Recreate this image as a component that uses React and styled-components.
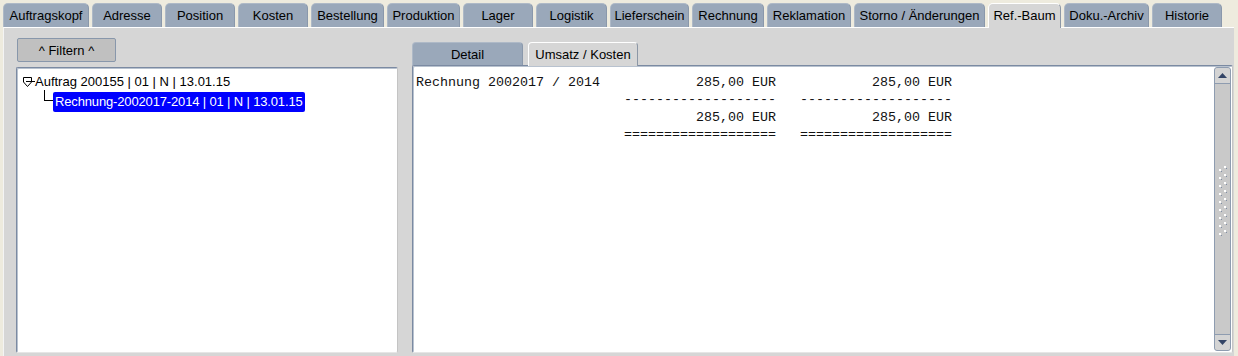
import React from "react";
import styled, { createGlobalStyle } from "styled-components";

const GlobalStyle = createGlobalStyle`
    html, body {
        margin: 0;
        padding: 0;
    }
    body {
        background: #eeebde;
        font-family: "Liberation Sans", Arial, sans-serif;
    }
`

const Page = styled.div`
    width: 1238px;
    height: 356px;
    display: flex;
    flex-direction: column;
    overflow: hidden;
    background: #eeebde;
`

const TabBar = styled.div`
    display: flex;
    gap: 3px;
    padding: 3px 3px 0 3px;
    height: 24px;
    position: relative;
    z-index: 1;
`

const Tab = styled.div`
    box-sizing: border-box;
    width: ${props => props.$w}px;
    height: ${props => props.$active ? 25 : 24}px;
    border-radius: 5px 5px 0 0;
    border: 1px solid;
    border-bottom: none;
    border-color: ${props => props.$active ? "#ffffff #8c97a6 transparent #ffffff" : "#aeb9c7 #8a98ab transparent #aeb9c7"};
    background: ${props => props.$active ? "#d6d6d6" : "#9aa8ba"};
    font-size: 13px;
    color: #000;
    display: flex;
    align-items: center;
    justify-content: center;
    white-space: nowrap;
    padding-bottom: ${props => props.$active ? 1 : 0}px;
`

const Content = styled.div`
    flex: 1;
    display: flex;
    margin: 0 4px 0 3px;
    padding: 10px 1px 3px 12px;
    background: #d6d6d6;
    border-top: 1px solid #ffffff;
    border-left: 1px solid #f4f4f4;
    min-height: 0;
`

const LeftColumn = styled.div`
    width: 382px;
    display: flex;
    flex-direction: column;
    gap: 5px;
`

const FilterButton = styled.div`
    box-sizing: border-box;
    width: 99px;
    height: 24px;
    margin-left: 1px;
    background: #c0c0c0;
    border: 1px solid #8897ab;
    border-radius: 2px;
    font-size: 13px;
    display: flex;
    align-items: center;
    justify-content: center;
    color: #000;
`

const Panel = styled.div`
    flex: 1;
    display: flex;
    background: #ffffff;
    border: 1px solid;
    border-color: #7b8aa2 #c4c4c4 #e6e6e6 #7b8aa2;
    border-radius: 2px;
    box-shadow: inset 1px 1px 0 #b8c2cf;
    min-height: 0;
`

const Tree = styled.div`
    flex: 1;
    padding: 5px 0 0 5px;
    font-size: 13px;
    color: #000;
`

const TreeRow = styled.div`
    display: flex;
    align-items: ${props => props.$child ? "flex-start" : "center"};
    height: ${props => props.$child ? 21 : 17}px;
    margin-left: ${props => props.$child ? 22 : 0}px;
    margin-top: ${props => props.$child ? 2 : 0}px;
`

const Connector = styled.span`
    box-sizing: border-box;
    width: 9px;
    height: 11px;
    margin-top: -2px;
    border-left: 1px solid #000;
    border-bottom: 1px solid #000;
`

const Selected = styled.span`
    height: 20px;
    line-height: 20px;
    padding: 0 2px;
    background: #0000ff;
    color: #fff;
    border-radius: 2px;
    letter-spacing: -0.15px;
`

const RightColumn = styled.div`
    flex: 1;
    display: flex;
    flex-direction: column;
    margin-left: 14px;
    padding-top: 4px;
`

const SubTabBar = styled.div`
    display: flex;
    gap: 5px;
    height: 23px;
    position: relative;
    z-index: 1;
`

const SubTab = styled(Tab)`
    height: ${props => props.$active ? 24 : 23}px;
    border-radius: 4px 4px 0 0;
`

const Report = styled.pre`
    flex: 1;
    margin: 0;
    padding: 8px 0 0 3px;
    font-family: "Liberation Mono", "Courier New", monospace;
    font-size: 13.33px;
    line-height: 17.4px;
    color: #111;
`

const Scrollbar = styled.div`
    width: 15px;
    margin: 1px 1px 1px 0;
    display: flex;
    flex-direction: column;
    background: #c9c9c9;
    border: 1px solid #8e9cb0;
    border-radius: 3px;
`

const ScrollButton = styled.div`
    height: 15px;
    display: flex;
    align-items: center;
    justify-content: center;
    background: #d4d4d4;
    border-radius: ${props => props.$down ? "0 0 3px 3px" : "3px 3px 0 0"};
    border-top: ${props => props.$down ? "1px solid #8e9cb0" : "none"};
    border-bottom: ${props => props.$down ? "none" : "1px solid #8e9cb0"};
`

const Thumb = styled.div`
    flex: 1;
    display: flex;
    align-items: center;
    justify-content: center;
    padding-bottom: 14px;
`

const tabs = [
    ["Auftragskopf", 86], ["Adresse", 70], ["Position", 70], ["Kosten", 70],
    ["Bestellung", 73], ["Produktion", 73], ["Lager", 70], ["Logistik", 71],
    ["Lieferschein", 79], ["Rechnung", 72], ["Reklamation", 84],
    ["Storno / Änderungen", 131], ["Ref.-Baum", 73], ["Doku.-Archiv", 85], ["Historie", 70]
]

const reportText = [
    "Rechnung 2002017 / 2014            285,00 EUR            285,00 EUR",
    "                          -------------------   -------------------",
    "                                   285,00 EUR            285,00 EUR",
    "                          ===================   ==================="
].join("\n")

const NodeIcon = () => (
    <svg width="13" height="12" viewBox="0 0 13 12" style={{ flex: "none" }}>
        <path d="M1.5 1.5 H9.5 V6 L5.5 10.5 L1.5 6 Z" fill="none" stroke="#000" strokeWidth="1" />
        <path d="M4 5.5 H13" stroke="#000" strokeWidth="1" />
    </svg>
)

const Arrow = ({ down }) => (
    <svg width="9" height="5" viewBox="0 0 9 5">
        <path d={down ? "M0 0 H9 L4.5 5 Z" : "M0 5 H9 L4.5 0 Z"} fill="#334466" />
    </svg>
)

const Grip = () => {
    const dots = []
    for (let i = 0; i < 9; i++) {
        dots.push(<rect key={"a" + i} x="0" y={i * 8 + 3} width="2" height="2" fill="#ffffff" />)
        dots.push(<rect key={"b" + i} x="5" y={i * 8} width="2" height="2" fill="#ffffff" />)
        dots.push(<rect key={"c" + i} x="2" y={i * 8 + 5} width="1" height="1" fill="#7f8ea5" />)
        dots.push(<rect key={"d" + i} x="7" y={i * 8 + 2} width="1" height="1" fill="#7f8ea5" />)
    }
    return <svg width="8" height="72" viewBox="0 0 8 72">{dots}</svg>
}

export default function App() {
    return (
        <Page>
            <GlobalStyle />
            <TabBar>
                {tabs.map(([label, w]) => (
                    <Tab key={label} $w={w} $active={label === "Ref.-Baum"}>{label}</Tab>
                ))}
            </TabBar>
            <Content>
                <LeftColumn>
                    <FilterButton>^ Filtern ^</FilterButton>
                    <Panel>
                        <Tree>
                            <TreeRow>
                                <NodeIcon />
                                <span>Auftrag 200155 | 01 | N | 13.01.15</span>
                            </TreeRow>
                            <TreeRow $child>
                                <Connector />
                                <Selected>Rechnung-2002017-2014 | 01 | N | 13.01.15</Selected>
                            </TreeRow>
                        </Tree>
                    </Panel>
                </LeftColumn>
                <RightColumn>
                    <SubTabBar>
                        <SubTab $w={111}>Detail</SubTab>
                        <SubTab $w={110} $active>Umsatz / Kosten</SubTab>
                    </SubTabBar>
                    <Panel>
                        <Report>{reportText}</Report>
                        <Scrollbar>
                            <ScrollButton><Arrow /></ScrollButton>
                            <Thumb><Grip /></Thumb>
                            <ScrollButton $down><Arrow down /></ScrollButton>
                        </Scrollbar>
                    </Panel>
                </RightColumn>
            </Content>
        </Page>
    )
}
